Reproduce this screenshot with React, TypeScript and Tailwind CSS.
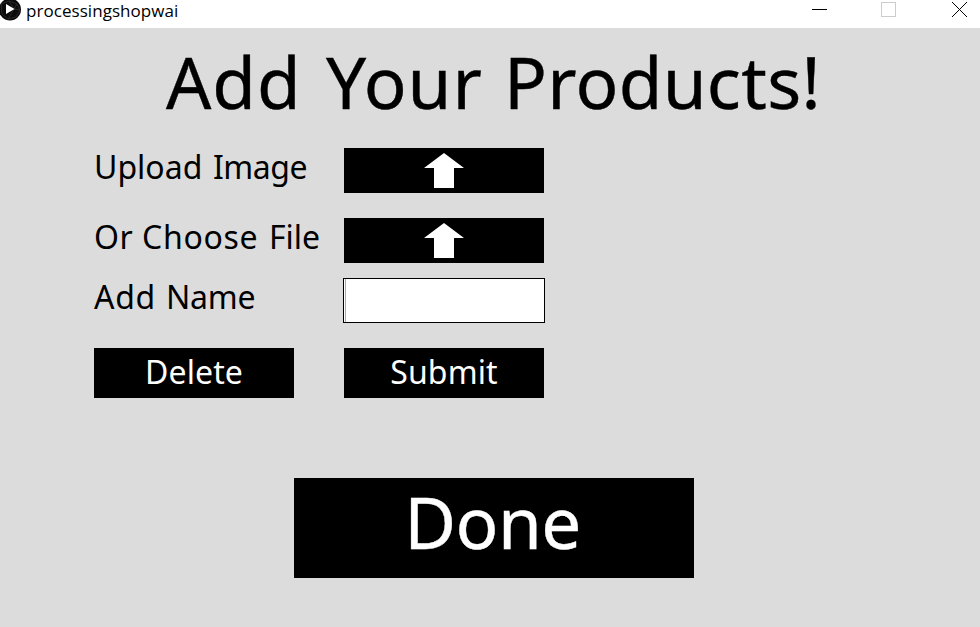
import { useState } from "react";

const sans = "font-['Noto_Sans','Open_Sans',sans-serif]";

function AppIcon() {
  return (
    <svg width="22" height="22" viewBox="0 0 22 22" className="shrink-0">
      <circle cx="10" cy="9.5" r="11" fill="#0b0b0b" />
      <path d="M1 4 L9 1 L17 4 L20 10 L16 17 L8 19 L2 14 Z M9 1 L14 9 L8 19 M17 4 L14 9 L20 10" fill="none" stroke="#2e2e2e" strokeWidth="0.8" />
      <path d="M6 4 L14.5 9 L6 14 Z" fill="#fff" />
    </svg>
  );
}

function TitleBar() {
  return (
    <header className="flex h-7 bg-white">
      <AppIcon />
      <span className="ml-1 grow font-['Open_Sans',sans-serif] text-[17px] leading-[22px] tracking-[0.05px]">processingshopwai</span>
      <svg width="180" height="28" viewBox="0 0 180 28" fill="none" shapeRendering="crispEdges">
        <path d="M12 9.5h15" stroke="#000" />
        <rect x="81.5" y="2.5" width="14" height="14" stroke="#ccc" />
        <path d="M152 2l15 15M167 2l-15 15" stroke="#000" shapeRendering="auto" />
      </svg>
    </header>
  );
}

function UploadButton() {
  return (
    <button className="flex h-[45px] w-[200px] justify-center bg-black pt-[5px]">
      <svg width="40" height="35" viewBox="0 0 40 35" fill="#fff">
        <path d="M20 0L40 15H30V35H10V15H0Z" />
      </svg>
    </button>
  );
}

export default function App() {
  const [name] = useState("");

  return (
    <div className={`flex h-[627px] w-[980px] flex-col overflow-hidden bg-[#dcdcdc] text-black ${sans}`}>
      <TitleBar />
      <main className="flex flex-col">
        <h1 className="mt-[14px] flex h-[106px] pl-[166px] text-[71px] leading-[80px] whitespace-nowrap [-webkit-text-stroke:0.4px]">
          <span className="w-[160px] tracking-[1px]">Add</span>
          <span className="w-[178px] tracking-[1px]">Your</span>
          <span className="tracking-[0.3px]">Products!</span>
        </h1>

        <div className="flex h-[70px] pl-[94px]">
          <label className="flex w-[250px] text-[32px] leading-[37px]">
            <span className="w-[119px]">Upload</span>
            <span className="tracking-[-0.5px]">Image</span>
          </label>
          <UploadButton />
        </div>
        <div className="flex h-[60px] pl-[94px]">
          <label className="flex w-[250px] text-[32px] leading-[37px]">
            <span className="w-[48px] tracking-[0.5px]">Or</span>
            <span className="w-[127px] tracking-[0.7px]">Choose</span>
            <span>File</span>
          </label>
          <UploadButton />
        </div>
        <div className="flex h-[70px] pl-[94px]">
          <label className="flex w-[249px] text-[32px] leading-[37px]">
            <span className="w-[72px] tracking-[0.7px]">Add</span>
            <span className="tracking-[-0.2px]">Name</span>
          </label>
          <div className="flex h-[45px] w-[202px] border border-black bg-white pl-px">
            {name}
            {/* text caret */}
            <div className="w-px bg-[#a9a9a9]" />
          </div>
        </div>

        <div className="flex h-[130px] gap-[50px] pl-[94px] text-[32px] leading-[47px] tracking-[0.1px] text-white">
          <button className="h-[50px] w-[200px] bg-black pb-[3px]">Delete</button>
          <button className="h-[50px] w-[200px] bg-black pb-[3px]">Submit</button>
        </div>
        <button className="ml-[294px] h-[100px] w-[400px] bg-black pr-[3px] pb-3 text-[71px] leading-[88px] tracking-[-0.5px] text-white [-webkit-text-stroke:0.4px]">
          Done
        </button>
      </main>
    </div>
  );
}
